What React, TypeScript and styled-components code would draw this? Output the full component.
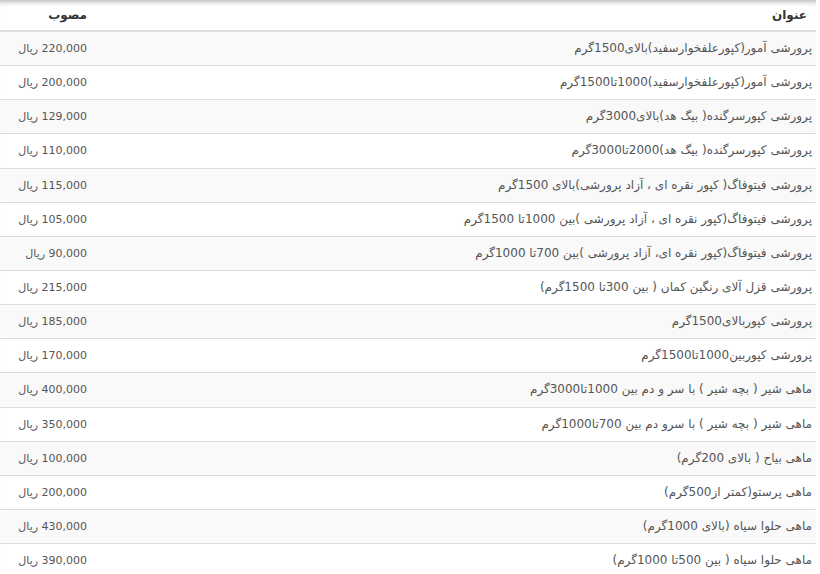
import styled, { createGlobalStyle } from "styled-components";

const GlobalStyle = createGlobalStyle`
  html, body {
    margin: 0;
    padding: 0;
    background: #fff;
  }
`;

const Wrapper = styled.div`
  width: 816px;
  direction: rtl;
  box-shadow: inset 0 6px 5px -4px rgba(0, 0, 0, 0.28);
`;

const Table = styled.table`
  width: 100%;
  border-collapse: collapse;
  border-spacing: 0;
  font-family: "DejaVu Sans", Tahoma, sans-serif;
  font-size: 11px;
  color: #555;
`;

const HeadCell = styled.th<{ narrow?: boolean }>`
  text-align: right;
  font-weight: bold;
  font-size: 12px;
  color: #333;
  height: 30px;
  padding: 0 ${(p) => (p.narrow ? "4px" : "9px")} 0 8px;
  line-height: 30px;
  border-bottom: 2px solid #ddd;
  width: ${(p) => (p.narrow ? "79px" : "auto")};
`;

const Row = styled.tr`
  &:nth-child(odd) {
    background-color: #f9f9f9;
  }
`;

const Cell = styled.td<{ wide?: boolean }>`
  text-align: right;
  padding: 8px 4px 8px 8px;
  font-size: ${(p) => (p.wide ? "12px" : "11px")};
  line-height: 17.14px;
  border-top: 1px solid #ddd;
  white-space: nowrap;
`;

const items: [string, string][] = [
  ["پرورشی آمور(کپورعلفخوارسفید)بالای1500گرم", "220,000"],
  ["پرورشی آمور(کپورعلفخوارسفید)1000تا1500گرم", "200,000"],
  ["پرورشی کپورسرگنده( بیگ هد)بالای3000گرم", "129,000"],
  ["پرورشی کپورسرگنده( بیگ هد)2000تا3000گرم", "110,000"],
  ["پرورشی فیتوفاگ( کپور نقره ای ، آزاد پرورشی)بالای 1500گرم", "115,000"],
  ["پرورشی فیتوفاگ(کپور نقره ای ، آزاد پرورشی )بین 1000تا 1500گرم", "105,000"],
  ["پرورشی فیتوفاگ(کپور نقره ای، آزاد پرورشی )بین 700تا 1000گرم", "90,000"],
  ["پرورشی قزل آلای رنگین کمان ( بین 300تا 1500گرم)", "215,000"],
  ["پرورشی کپوربالای1500گرم", "185,000"],
  ["پرورشی کپوربین1000تا1500گرم", "170,000"],
  ["ماهی شیر ( بچه شیر ) با سر و دم بین 1000تا3000گرم", "400,000"],
  ["ماهی شیر ( بچه شیر ) با سرو دم بین 700تا1000گرم", "350,000"],
  ["ماهی بیاح ( بالای 200گرم)", "100,000"],
  ["ماهی پرستو(کمتر از500گرم)", "200,000"],
  ["ماهی حلوا سیاه (بالای 1000گرم)", "430,000"],
  ["ماهی حلوا سیاه ( بین 500تا 1000گرم)", "390,000"],
];

function App() {
  return (
    <>
      <GlobalStyle />
      <Wrapper>
        <Table>
          <thead>
            <tr>
              <HeadCell>عنوان</HeadCell>
              <HeadCell narrow>مصوب</HeadCell>
            </tr>
          </thead>
          <tbody>
            {items.map(([title, price]) => (
              <Row key={title}>
                <Cell wide>{title}</Cell>
                <Cell>{price} ریال</Cell>
              </Row>
            ))}
          </tbody>
        </Table>
      </Wrapper>
    </>
  );
}

export default App;
